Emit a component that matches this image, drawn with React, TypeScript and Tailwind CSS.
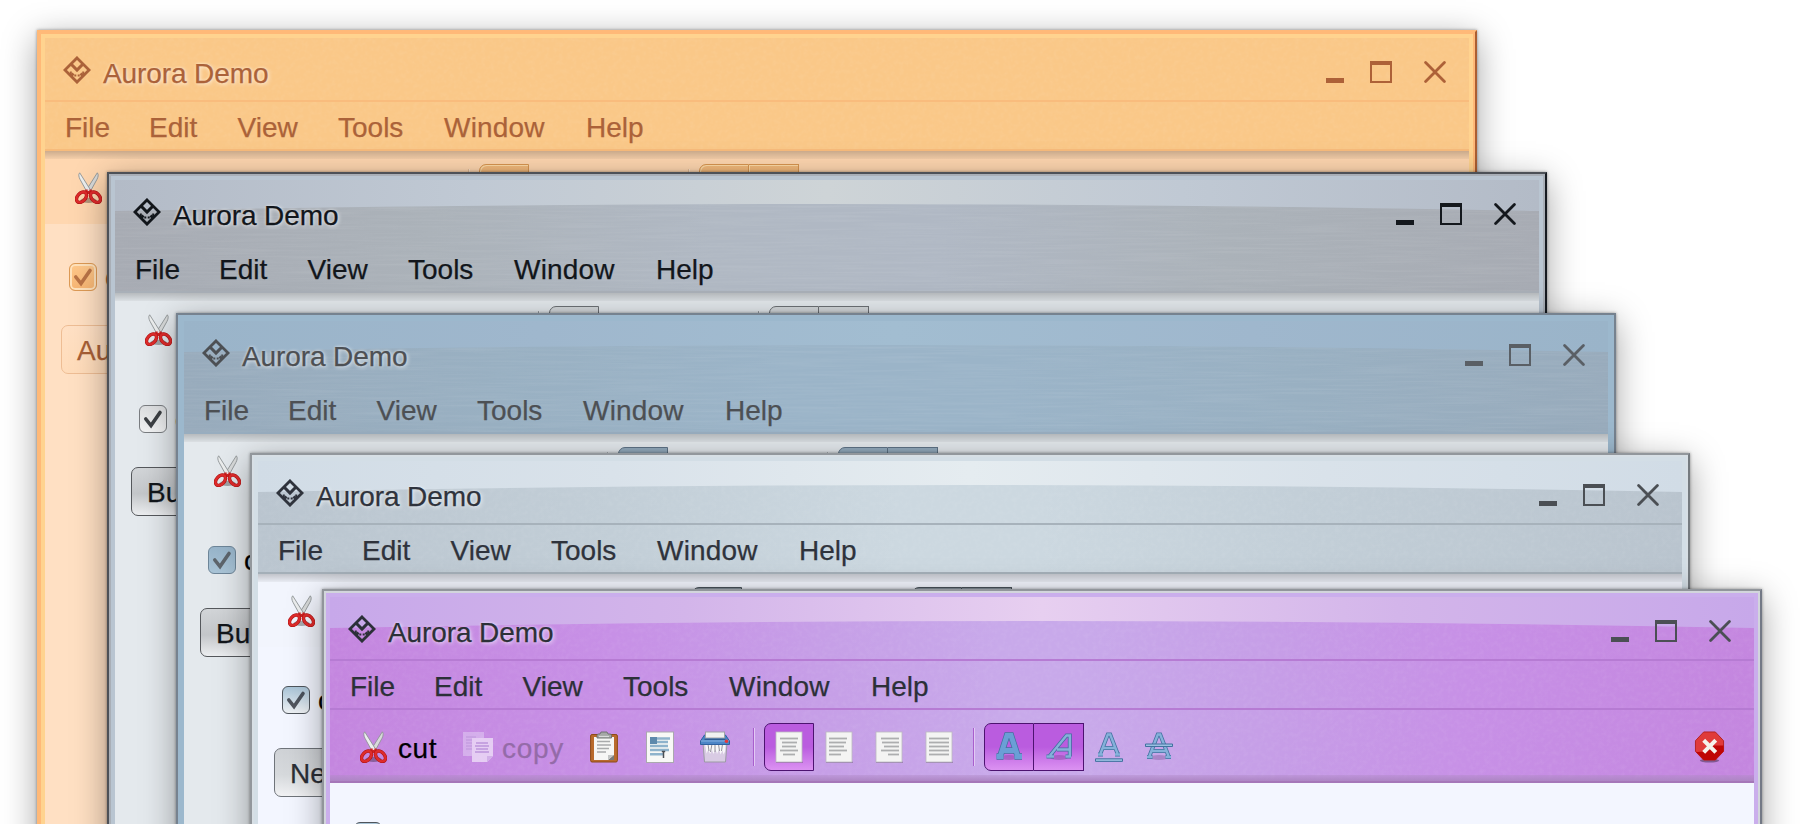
import clsx from "clsx";
import type { ReactNode } from "react";

type Skin = {
  id: string;
  place: string;
  outer: string;
  middle: string;
  inner: string;
  header: string;
  sheen: [string, string, string] | null;
  line: string;
  lineBottom: string;
  text: string;
  controls: string;
  toolbar: string;
  body: string;
  toggle: string;
  separator: string;
  check: string;
  button: string;
  buttonText: string;
  label: string;
};

const skins: Skin[] = [
  {
    id: "orange",
    place: "left-[37px] top-[30px]",
    outer: "border-[#ffb978] border-r-[#ab5e31]",
    middle: "border-[#ffb978]",
    inner: "border-[#ffd38f]",
    header: "bg-[#fac888]",
    sheen: null,
    line: "bg-[#f9bc7d]",
    lineBottom: "bg-[#f7bb7b]",
    text: "text-[#ab6239]",
    controls: "text-[#ad6138]",
    toolbar: "bg-[#ffd7b0]",
    body: "bg-[#ffe0c3]",
    toggle: "border-[#d99650] bg-linear-to-b from-[#f3ba7c] to-[#f6b270] shadow-[inset_1px_1px_0_#ffdca8]",
    separator: "border-[#e3bd98] bg-[#ffe6cc]",
    check: "border-[#dd9a55] bg-linear-to-b from-[#ffc98c] to-[#f7b572] shadow-[inset_0_0_0_2px_#ffe2bc]",
    button: "border-[#eebd94] bg-linear-to-b from-[#ffe0c4] to-[#ffdcba]",
    buttonText: "text-[#a85f36]",
    label: "Aurora",
  },
  {
    id: "steel",
    place: "left-[107px] top-[172px]",
    outer: "border-[#4d5157] border-r-[#161a20]",
    middle: "border-[#a9afb7]",
    inner: "border-[#b9c5d1]",
    header: "bg-[linear-gradient(90deg,#a7abb3,#abb2b9_22%,#b0b8c3_42%,#b0b8c4_58%,#abb2b9_78%,#a7abb3)]",
    sheen: ["#b3bbc7", "#c0c9d4", "#ced4d7"],
    line: "bg-transparent",
    lineBottom: "bg-[#a9b0b8]",
    text: "text-[#12161b]",
    controls: "text-[#14181d]",
    toolbar: "bg-[#e4e9ed]",
    body: "bg-[#e4e9ed]",
    toggle: "border-[#6d7175] bg-[#d3d7da]",
    separator: "border-[#9ca1a6] bg-[#eef1f4]",
    check: "border-[#7a7d81] bg-linear-to-b from-[#dcdee0] to-[#f1f2f3]",
    button: "border-[#55585c] bg-linear-to-b from-[#d2d5d8] via-[#c3c6c9] via-55% to-[#eceef0]",
    buttonText: "text-[#12161b]",
    label: "Button",
  },
  {
    id: "blue",
    place: "left-[176px] top-[313px]",
    outer: "border-[#76828f]",
    middle: "border-[#9cb8cd]",
    inner: "border-[#9cb8cd]",
    header: "bg-[linear-gradient(90deg,#98abbc,#99b0c2_22%,#9bb4c8_42%,#9bb4c8_58%,#99b0c2_78%,#98abbc)]",
    sheen: ["#9ab4c9", "#9fb7cd", "#a2bdd1"],
    line: "bg-transparent",
    lineBottom: "bg-[#98adbf]",
    text: "text-[#4d5054]",
    controls: "text-[#5a5f65]",
    toolbar: "bg-[#e4e9ed]",
    body: "bg-[#e4e9ed]",
    toggle: "border-[#5e7386] bg-[#93abbd]",
    separator: "border-[#b0b7bd] bg-[#eef1f4]",
    check: "border-[#6d8598] bg-linear-to-b from-[#97b4ca] to-[#a9c4d7]",
    button: "border-[#55585c] bg-linear-to-b from-[#d2d5d8] via-[#c3c6c9] via-55% to-[#eceef0]",
    buttonText: "text-[#12161b]",
    label: "Button",
  },
  {
    id: "silver",
    place: "left-[250px] top-[453px]",
    outer: "border-[#92979c] border-r-[#757b80]",
    middle: "border-[#d7dfe5]",
    inner: "border-[#d3dee6]",
    header: "bg-[linear-gradient(90deg,#bac5cf,#c2ced7_25%,#ccd8e0_45%,#ccd8e0_55%,#c2ced7_75%,#b9c4ce)]",
    sheen: ["#d1dce6", "#d9e2ea", "#e5ecf0"],
    line: "bg-[#a7b2bb]",
    lineBottom: "bg-[#a4afb8]",
    text: "text-[#2f333c]",
    controls: "text-[#4b4f54]",
    toolbar: "bg-[#f2f5fd]",
    body: "bg-[#f3f6ff]",
    toggle: "border-[#4d565e] bg-[#929ea8]",
    separator: "border-[#b0b7bd] bg-[#ffffff]",
    check: "border-[#4f555c] bg-linear-to-b from-[#a9c4d7] to-[#eef1f4]",
    button: "border-[#6f747a] bg-linear-to-b from-[#cfd2d6] via-[#d6d9dc] via-55% to-[#f1f2f4]",
    buttonText: "text-[#2b2f36]",
    label: "New",
  },
  {
    id: "purple",
    place: "left-[322px] top-[589px]",
    outer: "border-[#91959b] border-r-[#737986]",
    middle: "border-[#d2d5dc]",
    inner: "border-[#caaeec]",
    header: "bg-[linear-gradient(90deg,#c486df,#c790e6_20%,#c69fe7_35%,#c8a9ea_47%,#c8a9ea_53%,#c69fe7_65%,#c790e6_80%,#c486df)]",
    sheen: ["#c7a8ea", "#d3b5ea", "#e7cff0"],
    line: "bg-[#b67bd3]",
    lineBottom: "bg-[#b67bd3]",
    text: "text-[#2c3038]",
    controls: "text-[#4b4f54]",
    toolbar: "",
    body: "bg-[#f3f6ff]",
    toggle: "border-[#4d1370] bg-linear-to-b from-[#ba5cdf] from-50% to-[#dc92f2]",
    separator: "border-[#a95fcd] bg-[#e2caf5]",
    check: "border-[#4f555c] bg-linear-to-b from-[#a9c4d7] to-[#eef1f4]",
    button: "border-[#6f747a] bg-[#d6d9dc]",
    buttonText: "text-[#2b2f36]",
    label: "New",
  },
];

function Logo() {
  return (
    <svg width="28" height="28" viewBox="0 0 28 28" fill="none" stroke="currentColor">
      <path d="M14 1.900 26.100 14 14 26.100 1.900 14Z" strokeWidth="2.800" />
      <path d="M7.500 7.500 14 14 20.500 7.500" strokeWidth="3.100" />
      <path d="M7.500 20.500l3-3M20.500 20.500l-3-3" strokeWidth="2.800" />
      <path d="M7.800 15.500v2.500M20.200 15.500v2.500M11.300 19.500h2M16.700 19.500h-2" strokeWidth="2" />
    </svg>
  );
}

function Scissors() {
  return (
    <svg width="27" height="32" viewBox="0 0 27 32" fill="none">
      <ellipse cx="13.500" cy="28.300" rx="8" ry="2.600" fill="#000" opacity=".3" />
      <path d="M22.300.800c1.600 1.500.800 4.500-.400 6.700L15 20l-3.800-1.600Z" fill="#d8dada" stroke="#8f9496" strokeWidth=".9" />
      <path d="M4.700.800c-1.600 1.500-.800 4.500.400 6.700L12 20l3.800-1.600Z" fill="#eceeee" stroke="#8f9496" strokeWidth=".9" />
      <path d="M10.500 17.500h6l1.500 4.500h-9Z" fill="#cf2222" />
      <ellipse cx="6.500" cy="25.200" rx="4" ry="6" transform="rotate(42 6.500 25.200)" stroke="#ab1212" strokeWidth="3.400" />
      <ellipse cx="20.500" cy="25.200" rx="4" ry="6" transform="rotate(-42 20.500 25.200)" stroke="#ab1212" strokeWidth="3.400" />
      <ellipse cx="6.500" cy="25.200" rx="4" ry="6" transform="rotate(42 6.500 25.200)" stroke="#df2b2b" strokeWidth="2.400" />
      <ellipse cx="20.500" cy="25.200" rx="4" ry="6" transform="rotate(-42 20.500 25.200)" stroke="#df2b2b" strokeWidth="2.400" />
      <circle cx="13.500" cy="18" r="1" fill="#eee" />
    </svg>
  );
}

function CopyIcon() {
  return (
    <svg width="30" height="32" viewBox="0 0 30 32" opacity=".6">
      <path d="M0 1h21v24H0Z" fill="#ece6fa" opacity=".65" />
      <path d="M3 6h10M3 9h6M3 12h6M3 15h6M3 18h6" stroke="#c3aae0" strokeWidth="1.300" />
      <path d="M9 7h21v18l-6 6H9Z" fill="#fbf9ff" />
      <path d="M24 31v-6h6Z" fill="#d9c8ec" />
      <path d="M13 12h12M12 15h14M13 18h12M12 21h14" stroke="#b79ad8" strokeWidth="1.400" />
    </svg>
  );
}

function Clipboard() {
  return (
    <svg width="28" height="32" viewBox="0 0 28 32">
      <rect x=".6" y="3.500" width="26.800" height="27.500" rx="1.500" fill="#b96a2d" stroke="#8c4a18" />
      <path d="M4 6h20v18l-5 5H4Z" fill="#f6f6f5" />
      <path d="M24 24v5h-6Z" fill="#777a7b" />
      <path d="M18 29v-5h6Z" fill="#c3c5c5" />
      <path d="M7 10.500h13M7 14h14M7 17.500h12M7 21h9" stroke="#a9abac" strokeWidth="1.500" />
      <path d="M7 7V4.500q0-1.500 1.500-1.500H10l1-2h6l1 2h2q1.500 0 1.500 1.500V7Z" fill="#a5a8a6" stroke="#6a6d6c" strokeWidth=".9" />
      <path d="M9 5.500h10" stroke="#d9dbda" strokeWidth="1.200" />
    </svg>
  );
}

function Article() {
  return (
    <svg width="28" height="32" viewBox="0 0 28 32">
      <rect x=".5" y="1" width="27" height="30.500" fill="#f8f8f6" stroke="#aaa9ae" />
      <path d="M11 7.500h13M11 11h11M4 15h9M4 19h19M4 23.300h14M13 15h9" stroke="#8fb3cc" strokeWidth="2.600" />
      <rect x="4" y="6" width="7" height="7" fill="#5d89ac" />
      <path d="M17.500 20v7M15.800 20.500h3.400" stroke="#4b4f54" strokeWidth="1.500" />
    </svg>
  );
}

function Shredder() {
  return (
    <svg width="30" height="32" viewBox="0 0 30 32">
      <path d="M3 12h24l-1.500 19h-21Z" fill="#d9cbe4" stroke="#9b9aa3" />
      <path d="M5 12.500h20.500l-.5 8-1.500 3-1-4-2 4-1.500-5-2 4.500-1.500-5-2 5-1.500-4-2 4-1.500-4.500-2 4Z" fill="#f7f7f8" />
      <path d="M8 13l1 7M12 13l-1.500 8M15 13v8M18.500 13l1 7M22.500 13l-1 7" stroke="#94939b" strokeWidth="1" />
      <path d="M4.500 4h21l4 6v3.500h-29V10Z" fill="#4c86c6" stroke="#2f62a0" />
      <path d="M1 10h28" stroke="#84b2e2" />
      <rect x="5.500" y="1" width="19" height="6" fill="#f1f1f1" stroke="#a0a2a5" />
      <path d="M4.500 8.300h21" stroke="#2c568c" strokeWidth="1.200" />
      <circle cx="26.500" cy="10.300" r="1.800" fill="#e23a3a" />
    </svg>
  );
}

function Paragraph({ lines }: { lines: [number, number][] }) {
  return (
    <svg width="28" height="32" viewBox="0 0 28 32">
      <path d="M1 31.300h27" stroke="#000" strokeOpacity=".25" strokeWidth="1.400" />
      <rect x="1" y="1" width="26" height="30" fill="#f4f4f3" stroke="#bcbabf" strokeWidth=".8" />
      {lines.map(([from, to], i) => (
        <path key={i} d={`M${from} ${7.5 + i * 4}H${to}`} stroke="#adaeaf" strokeWidth="1.800" />
      ))}
    </svg>
  );
}

const center: [number, number][] = [[5, 23], [7, 22], [7, 21], [5, 23], [8, 20]];
const left: [number, number][] = [[4, 22], [4, 21], [4, 19], [4, 22], [4, 16]];
const right: [number, number][] = [[6, 24], [7, 24], [9, 24], [6, 24], [13, 24]];
const justify: [number, number][] = [[4, 24], [4, 24], [4, 24], [4, 24], [4, 24]];

const strokes = {
  bold: "M6.500 24.500 13 4.500h4L23.500 24.500M9 19.500h12M2.500 25.500h7M20.500 25.500h7.500",
  italic: "M6 24.500 22.500 4.500h3.300V25.500M13 18.500h12.500M2.500 25.500h7.500M21.500 25.500h5.500",
  underline: "M6.500 22.500 13.800 3.500h2.400L23.500 22.500M9 17h12M4 23.500h5M21 23.500h5",
  strike: "M5.500 25 13.800 3.500h2.400L24.500 25M8 20h14M3 26h5.500M21.500 26h5.500",
};

function Letter({ kind }: { kind: keyof typeof strokes }) {
  const d = strokes[kind];
  const bold = kind === "bold";
  return (
    <svg width="30" height="32" viewBox="0 0 30 32" fill="none">
      {kind !== "underline" && <ellipse cx="15" cy="26.500" rx="9" ry="2.500" fill="#3a1050" opacity=".22" />}
      <path d={d} stroke="#42719f" strokeWidth={bold ? 6.4 : 4} />
      <path d={d} stroke={bold ? "#6a9fd6" : "#85b1da"} strokeWidth={bold ? 5 : 2.4} />
      {kind === "underline" && <path d="M1.500 27.800h27v2.600h-27Z" fill="#9bc0e2" stroke="#42719f" />}
      {kind === "strike" && <path d="M1.500 13h27v2.500h-27Z" fill="#9bc0e2" stroke="#42719f" />}
    </svg>
  );
}

function StopIcon() {
  return (
    <svg width="31" height="32" viewBox="0 0 32 33" preserveAspectRatio="none">
      <ellipse cx="16" cy="30.500" rx="10" ry="2" fill="#000" opacity=".35" />
      <path d="M10 1h12l8.500 9v11L22 30H10l-8.500-9V10Z" fill="#e03a3a" stroke="#b52222" />
      <path d="M30.500 15v6L22 30H10l-8-8.500Q17 22 20 15Z" fill="#bf0505" />
      <path d="M11.500 11l9.500 9.500M21 11l-9.500 9.500" stroke="#f5f1ec" strokeWidth="4.200" strokeLinecap="square" />
    </svg>
  );
}

function Sheen({ id, stops }: { id: string; stops: [string, string, string] }) {
  const [edge, mid, hot] = stops;
  return (
    <svg className="absolute left-0 top-0" width="1424" height="32" viewBox="0 0 1424 32">
      <defs>
        <linearGradient id={`sheen-${id}`}>
          <stop offset="0" stopColor={edge} />
          <stop offset=".25" stopColor={mid} />
          <stop offset=".5" stopColor={hot} />
          <stop offset=".75" stopColor={mid} />
          <stop offset="1" stopColor={edge} />
        </linearGradient>
      </defs>
      <path d="M0 0H1424V31Q712 17 0 31Z" fill={`url(#sheen-${id})`} />
    </svg>
  );
}

// metal skins get long horizontal streaks, the others a fine mottled grain
function Grain({ id }: { id: string }) {
  const brushed = id === "steel" || id === "blue";
  return (
    <svg className="pointer-events-none absolute inset-0 -z-10 h-full w-full opacity-35">
      <filter id={`grain-${id}`} x="0" y="0" width="100%" height="100%">
        <feTurbulence type="fractalNoise" baseFrequency={brushed ? "0.012 0.5" : "0.22"} numOctaves={2} />
        <feColorMatrix values={brushed ? "0 0 0 0 1  0 0 0 0 1  0 0 0 0 1  .4 0 0 0 -.15" : "0 0 0 0 1  0 0 0 0 1  0 0 0 0 1  .35 0 0 0 -.14"} />
      </filter>
      <rect width="100%" height="100%" filter={`url(#grain-${id})`} />
    </svg>
  );
}

function Controls() {
  return (
    <div className="mt-[23px] mr-[23px] ml-auto flex h-[22px] items-end">
      <div className="mr-[26px] h-[5px] w-[18px] bg-current" />
      <div className="mr-8 h-[22px] w-[22px] border-2 border-t-4 border-current" />
      <svg width="22" height="22" viewBox="0 0 22 22" stroke="currentColor" strokeWidth="2.800" strokeLinecap="round">
        <path d="M1.600 1.600 20.400 20.400M20.400 1.600 1.600 20.400" />
      </svg>
    </div>
  );
}

function Cell({ children }: { children: ReactNode }) {
  return <div className="flex w-[50px] justify-center">{children}</div>;
}

function Separator({ color }: { color: string }) {
  return <div className={clsx("mr-[9px] h-[38px] w-[2px] border-l", color)} />;
}

function Toolbar({ skin }: { skin: Skin }) {
  const main = skin.id === "purple";
  return (
    <div className={clsx("relative flex h-[73px] items-center pl-[30px] pt-px", skin.toolbar)}>
      {main ? (
        <div className="absolute inset-x-0 bottom-0 h-2 border-b-2 border-[#a577b9] bg-linear-to-b from-[#b08ac6]/40 to-[#ad86c4]" />
      ) : (
        <div className="absolute inset-x-0 top-0 h-2 bg-linear-to-b from-black/20 to-black/4" />
      )}
      <div className="w-[37px]"><Scissors /></div>
      <div className="w-[66px] pt-[3px] pl-px tracking-[.6px] text-black">{main && "cut"}</div>
      <div className="w-[39px]"><CopyIcon /></div>
      <div className="w-[88px] pt-[3px] tracking-[.7px] text-[#946ba8]">{main && "copy"}</div>
      <div className="w-14"><Clipboard /></div>
      <div className="w-[54px]"><Article /></div>
      <div className="w-[53px]"><Shredder /></div>
      <Separator color={skin.separator} />
      <div className={clsx("flex h-12 w-[50px] items-center justify-center rounded-l-[7px] border", skin.toggle)}>
        <Paragraph lines={center} />
      </div>
      <Cell><Paragraph lines={left} /></Cell>
      <Cell><Paragraph lines={right} /></Cell>
      <Cell><Paragraph lines={justify} /></Cell>
      <div className="w-[9px]" />
      <Separator color={skin.separator} />
      <div className={clsx("flex h-12 w-[50px] items-center justify-center rounded-l-[7px] border", skin.toggle)}>
        <Letter kind="bold" />
      </div>
      <div className={clsx("flex h-12 w-[50px] items-center justify-center border border-l-0", skin.toggle)}>
        <Letter kind="italic" />
      </div>
      <Cell><Letter kind="underline" /></Cell>
      <Cell><Letter kind="strike" /></Cell>
      <div className="mr-[29px] ml-auto"><StopIcon /></div>
    </div>
  );
}

function Frame({ skin }: { skin: Skin }) {
  const main = skin.id === "purple";
  return (
    <div className={clsx("absolute h-[900px] w-[1440px] border-2 shadow-[0_8px_32px_rgba(0,0,0,0.36),0_0_3px_rgba(0,0,0,0.4)]", skin.place, skin.outer)}>
      <div className={clsx("h-full border-2", skin.middle)}>
        <div className={clsx("h-full border-4", skin.inner, skin.body)}>
          <div className={clsx("relative isolate", skin.header)}>
            <Grain id={skin.id} />
            <div className="relative">
              {skin.sheen && <Sheen id={skin.id} stops={skin.sheen} />}
              <div className={clsx("relative flex h-[62px] items-start", skin.text)}>
                <div className="mt-[18px] ml-[18px]"><Logo /></div>
                <div className="ml-3 pt-5 leading-[32px] tracking-[-.1px] [text-shadow:1px_1px_4px_rgba(255,255,255,0.75),0_0_3px_rgba(255,255,255,0.4)]">
                  Aurora Demo
                </div>
                <div className={clsx("ml-auto flex", skin.controls)}><Controls /></div>
              </div>
            </div>
            <div className={clsx("h-0.5", skin.line)} />
            <div className={clsx("flex h-[47px] items-center pt-[5px] pl-5", skin.text)}>
              <span className="w-[84px]">File</span>
              <span className="w-[88.5px]">Edit</span>
              <span className="w-[100.5px]">View</span>
              <span className="w-[106px]">Tools</span>
              <span className="w-[142px] tracking-[.2px]">Window</span>
              <span>Help</span>
            </div>
            <div className={clsx("h-0.5", skin.lineBottom)} />
            {main && <Toolbar skin={skin} />}
          </div>
          {!main && <Toolbar skin={skin} />}
          <div className={clsx("flex items-center pl-6", main ? "pt-[39px]" : "pt-[38px]")}>
            <div className={clsx("flex h-7 w-7 items-center justify-center rounded-md border", skin.check, skin.text)}>
              <svg width="20" height="20" viewBox="0 0 20 20" fill="none" stroke="currentColor" strokeWidth="3.600" strokeLinecap="round" opacity=".8">
                <path d="M2.800 10 8 16.500 17 3.500" />
              </svg>
            </div>
            <span className={clsx("ml-2 pt-0.5", skin.id === "orange" ? skin.buttonText : "text-black")}>{!main && "check"}</span>
          </div>
          <div className={clsx("mt-[33px] ml-4 flex h-[49px] w-[140px] items-center rounded-[7px] border pt-[3px] pl-[15px]", skin.button, skin.buttonText)}>
            {!main && skin.label}
          </div>
        </div>
      </div>
    </div>
  );
}

export default function App() {
  return (
    <div className="relative h-[824px] w-[1800px] overflow-hidden bg-white font-['Liberation_Sans',Arial,sans-serif] text-[28px] leading-none whitespace-nowrap [-webkit-text-stroke:0.25px_currentColor]">
      {skins.map((skin) => (
        <Frame key={skin.id} skin={skin} />
      ))}
    </div>
  );
}
